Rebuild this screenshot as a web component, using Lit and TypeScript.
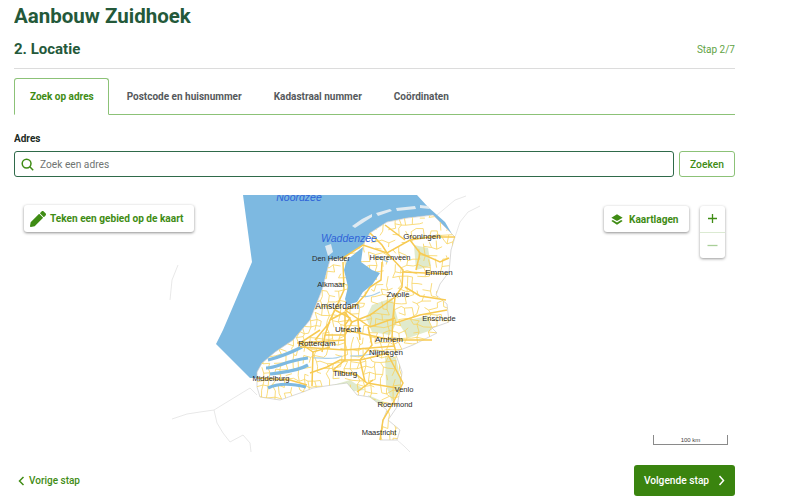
import { LitElement, html, css, svg } from 'lit';
import { customElement, state } from 'lit/decorators.js';

const LAND =
  'M330,260 343,258 363,245 370,233 387,222 407,218 433,215 445,227 455,237 451,250 449,272 440,284 436,295 447,304 449,322 432,328 437,333 413,345 395,352 402,372 400,390 397,407 388,420 400,430 397,440 380,440 383,420 387,410 370,397 357,395 347,383 332,385 313,388 303,392 280,400 260,397 257,387 257,372 262,363 275,352 293,340 310,320 322,290 328,267Z';
const SEA =
  'M243,195 417,195 428,207 445,222 452,234 445,228 433,215 407,218 387,222 370,233 363,245 343,258 330,260 328,267 322,290 310,320 293,342 275,358 262,365 257,378 250,378 216,344 223,330 252,262Z';
const LAKE = 'M347,260 363,247 361,262 372,270 380,273 372,285 363,292 357,302 347,305 345,299 348,287 344,270Z';
const ISLANDS = [
  'M325,246 331,244 333,252 328,256Z',
  'M352,226 362,219 372,214 372,217 355,228Z',
  'M376,213 390,209 392,211 378,216Z',
  'M396,208 415,206 416,209 397,211Z',
  'M420,205 428,206 430,209 420,208Z',
];
const DELTA = [
  'M268,360 C280,357 292,352 302,347',
  'M266,368 C278,368 284,361 308,358',
  'M270,374 C282,372 296,372 308,365',
  'M268,388 C276,384 290,383 306,387',
];
const RIVERS = [
  'M312,358 C322,357 332,361 342,356',
  'M350,356 C362,356 370,355 380,352',
  'M360,296 C366,298 372,296 380,292',
  'M378,256 C380,259 384,260 388,262',
];
const GREEN = [
  'M372,305 392,298 398,320 390,335 372,332 366,318Z',
  'M414,245 428,248 431,266 416,270Z',
  'M398,322 428,316 432,330 408,338Z',
  'M385,356 396,358 402,385 392,402 386,385Z',
  'M330,386 350,380 365,390 345,392Z',
  'M368,395 384,402 382,412 372,404Z',
];
const MAIN_ROADS = [
  'M343,258 363,245 387,253 410,240 430,237 455,237',
  'M410,240 420,253 416,270',
  'M382,262 381,280 370,287 365,295 355,306 345,310',
  'M387,253 403,270 402,287 395,297 393,317 392,338',
  'M403,272 448,274',
  'M395,297 370,315 352,322',
  'M395,323 420,315 447,310',
  'M345,310 370,327 395,318',
  'M343,262 344,290 335,310 330,320',
  'M345,312 345,335 345,360 333,370',
  'M345,330 392,340 432,340',
  'M297,343 345,340',
  'M300,347 345,350 395,346',
  'M313,352 312,386',
  'M310,373 327,367 340,360 360,360 373,357 388,353',
  'M333,370 357,375 367,383 397,388',
  'M357,392 373,380',
  'M365,382 360,360',
  'M387,353 403,383 393,403 383,420 380,440',
  'M257,378 290,380 307,385',
  'M330,320 345,312 352,322 345,335 325,335 330,320',
  'M315,340 330,322',
  'M360,340 358,320',
  'M405,240 385,225',
  'M320,330 300,343 313,352 330,347',
  'M368,327 372,345 360,360',
  'M392,338 396,352',
  'M325,335 322,352',
  'M405,287 420,296 446,300',
  'M420,253 440,262 449,258',
  'M370,233 382,245 387,253',
  'M335,310 350,318 345,325',
];
const BORDERS = [
  'M257,395 250,388 214,410 200,412 187,414 172,419',
  'M214,410 217,423 223,433 230,442 243,435 250,443 251,452',
  'M397,440 404,446 410,452',
  'M437,215 455,200 466,196',
  'M455,237 460,222 468,212 480,206',
  'M178,265 172,280 170,300',
];
const CITIES: [string, number, number, number][] = [
  ['Groningen', 422, 239, 8],
  ['Den Helder', 331, 261, 7.5],
  ['Heerenveen', 390, 260, 7.5],
  ['Emmen', 439, 275, 8],
  ['Alkmaar', 331, 287, 7.5],
  ['Zwolle', 398, 297, 8],
  ['Amsterdam', 337, 309, 8.5],
  ['Enschede', 439, 321, 7.5],
  ['Utrecht', 348, 332, 8],
  ['Rotterdam', 317, 346, 8],
  ['Arnhem', 389, 342, 8],
  ['Nijmegen', 386, 355, 8],
  ['Tilburg', 345, 376, 8],
  ['Middelburg', 271, 381, 7.5],
  ['Venlo', 404, 392, 7.5],
  ['Roermond', 395, 407, 7.5],
  ['Maastricht', 379, 435, 7.5],
];

// minor roads: jittered grid, good enough at this zoom level
function minorRoads(): string {
  let seed = 17;
  const rnd = () => {
    seed = (seed * 16807) % 2147483647;
    return seed / 2147483647;
  };
  const step = 6;
  const pt = new Map<string, [number, number]>();
  const at = (x: number, y: number) => {
    const k = x + ',' + y;
    if (!pt.has(k)) pt.set(k, [x + rnd() * 4 - 2, y + rnd() * 4 - 2]);
    return pt.get(k)!;
  };
  let d = '';
  for (let x = 250; x < 460; x += step) {
    for (let y = 212; y < 445; y += step) {
      const a = at(x, y);
      const chance = y > 300 ? 0.62 : 0.42;
      if (rnd() < chance) {
        const b = at(x + step, y);
        d += `M${a[0].toFixed(1)},${a[1].toFixed(1)}L${b[0].toFixed(1)},${b[1].toFixed(1)}`;
      }
      if (rnd() < chance) {
        const b = at(x, y + step);
        d += `M${a[0].toFixed(1)},${a[1].toFixed(1)}L${b[0].toFixed(1)},${b[1].toFixed(1)}`;
      }
    }
  }
  return d;
}

@customElement('app-root')
export class AppRoot extends LitElement {
  @state()
  activeTab = 'Zoek op adres';

  tabs = ['Zoek op adres', 'Postcode en huisnummer', 'Kadastraal nummer', 'Coördinaten'];
  minor = minorRoads();

  static styles = css`
    :host {
      display: block;
      width: 721px;
      height: 500px;
      margin-left: 14px;
      font-family: Roboto, sans-serif;
      color: #1f5c3a;
      overflow: hidden;
    }

    h1 {
      margin: 0;
      padding-top: 3px;
      height: 27px;
      font-size: 20.5px;
      line-height: 26px;
      font-weight: 700;
      color: #24593a;
    }

    .step-head {
      display: flex;
      align-items: center;
      justify-content: space-between;
      height: 32px;
      padding-top: 3px;
      padding-bottom: 3px;
      border-bottom: 1px solid #dcdcdc;
    }

    h2 {
      margin: 0;
      font-size: 15px;
      font-weight: 700;
      color: #24593a;
    }

    .step-count {
      font-size: 10px;
      color: #5fa345;
      padding-top: 1px;
    }

    .tabs {
      display: flex;
      margin-top: 9px;
      height: 37px;
      border-bottom: 1px solid #8cc277;
      box-sizing: border-box;
    }

    .tab {
      display: flex;
      align-items: center;
      padding: 0 16px;
      font-size: 10px;
      font-weight: 700;
      color: #55595c;
      box-sizing: border-box;
      height: 37px;
      white-space: nowrap;
    }

    .tab.active {
      padding: 0 14px 0 15px;
      margin-right: 2px;
      color: #3f8c14;
      background: #fff;
      border: 1px solid #8cc277;
      border-bottom: 1px solid #fff;
      border-radius: 3px 3px 0 0;
    }

    label {
      display: block;
      margin-top: 17px;
      height: 19px;
      font-size: 10px;
      line-height: 13px;
      font-weight: 700;
      color: #1d2b24;
    }

    .search {
      display: flex;
      gap: 5px;
      height: 26px;
    }

    .input {
      flex: 1;
      display: flex;
      align-items: center;
      gap: 6px;
      padding-left: 6px;
      border: 1.5px solid #2f6a4a;
      border-radius: 3px;
      font-size: 10.2px;
      color: #6f7472;
    }

    .btn-outline {
      display: flex;
      align-items: center;
      justify-content: center;
      width: 56px;
      box-sizing: border-box;
      border: 1px solid #8cc277;
      border-radius: 3px;
      font-size: 10.3px;
      font-weight: 500;
      color: #3f8c14;
    }

    .map {
      position: relative;
      margin-top: 18px;
      height: 257px;
      overflow: hidden;
    }

    .map > svg {
      display: block;
    }

    .soft {
      filter: blur(0.35px);
    }

    .map-btn {
      position: absolute;
      display: flex;
      align-items: center;
      box-sizing: border-box;
      height: 27px;
      background: #fff;
      border-radius: 3px;
      box-shadow: 0 1px 3px rgba(0, 0, 0, 0.45);
      font-size: 10.1px;
      font-weight: 700;
      color: #3f8c14;
      white-space: nowrap;
    }

    .draw {
      left: 10px;
      top: 10px;
      width: 170px;
      padding-left: 6px;
      gap: 4px;
    }

    .layers {
      left: 590px;
      top: 11px;
      width: 85px;
      height: 26px;
      padding-left: 7px;
      gap: 6px;
    }

    .zoom {
      position: absolute;
      left: 686px;
      top: 11px;
      width: 25px;
      height: 52px;
      display: flex;
      flex-direction: column;
      background: #fff;
      border-radius: 3px;
      box-shadow: 0 1px 3px rgba(0, 0, 0, 0.4);
    }

    .zoom div {
      flex: 1;
      display: flex;
      align-items: center;
      justify-content: center;
    }

    .zoom div + div {
      border-top: 1px solid #dbead2;
    }

    .scale {
      position: absolute;
      left: 639px;
      top: 240px;
      width: 75px;
      height: 10px;
      box-sizing: border-box;
      border: 1px solid #8a8a8a;
      border-top: 0;
      font-family: 'Liberation Sans', sans-serif;
      font-size: 6px;
      line-height: 10px;
      text-align: center;
      color: #444;
    }

    .footer {
      display: flex;
      align-items: center;
      justify-content: space-between;
      margin-top: 13px;
      padding-left: 4px;
    }

    .back {
      display: flex;
      align-items: center;
      gap: 4px;
      font-size: 10px;
      font-weight: 500;
      color: #3f8c14;
    }

    .next {
      display: flex;
      align-items: center;
      justify-content: center;
      gap: 9px;
      width: 101px;
      height: 31px;
      background: #3a840f;
      border-radius: 3px;
      font-size: 10.2px;
      font-weight: 500;
      color: #fff;
    }
  `;

  renderMap() {
    return html`
      <svg width="721" height="257" viewBox="14 195 721 257" xmlns="http://www.w3.org/2000/svg">
        <defs>
          <clipPath id="land"><path d=${LAND} /></clipPath>
        </defs>
        <g class="soft">
          ${BORDERS.map(b => svg`<path d=${b} fill="none" stroke="#e2e2e2" stroke-width="0.8" />`)}
          <path d=${SEA} fill="#7db9e1" />
          ${ISLANDS.map(p => svg`<path d=${p} fill="#dfeaf1" />`)}
          <path d=${LAND} fill="#fff" stroke="#c9c9c9" stroke-width="0.7" />
          <g clip-path="url(#land)">
            ${GREEN.map(p => svg`<path d=${p} fill="#c6d9a2" opacity="0.55" />`)}
            <path d=${this.minor} fill="none" stroke="#f7d35c" stroke-width="0.8" />
          </g>
          <path d=${LAKE} fill="#7db9e1" />
          ${DELTA.map(p => svg`<path d=${p} fill="none" stroke="#7db9e1" stroke-width="3.2" />`)}
          ${RIVERS.map(p => svg`<path d=${p} fill="none" stroke="#a9d0ea" stroke-width="1.2" />`)}
          ${MAIN_ROADS.map(r => svg`<path d=${r} fill="none" stroke="#f7ca52" stroke-width="1.5" />`)}
        </g>
        <g font-family="'Liberation Sans', sans-serif" text-anchor="middle">
          <text x="299" y="201" font-size="10.5" font-style="italic" fill="#2f63d8">Noordzee</text>
          <text x="349" y="242" font-size="10.5" font-style="italic" fill="#2f63d8">Waddenzee</text>
          ${CITIES.map(
            ([name, x, y, size]) => svg`<text x=${x} y=${y} font-size=${size} fill="#2a2a2a">${name}</text>`
          )}
        </g>
      </svg>
    `;
  }

  render() {
    return html`
      <h1>Aanbouw Zuidhoek</h1>
      <div class="step-head">
        <h2>2. Locatie</h2>
        <span class="step-count">Stap 2/7</span>
      </div>

      <div class="tabs">
        ${this.tabs.map(t => html`<div class="tab ${t === this.activeTab ? 'active' : ''}">${t}</div>`)}
      </div>

      <label>Adres</label>
      <div class="search">
        <div class="input">
          <svg width="13" height="13" viewBox="0 0 13 13" fill="none" stroke="#3f8c14" stroke-width="1.5">
            <circle cx="5.6" cy="5.6" r="4.4" />
            <path d="M8.8 8.8 12.2 12.2" />
          </svg>
          Zoek een adres
        </div>
        <div class="btn-outline">Zoeken</div>
      </div>

      <div class="map">
        ${this.renderMap()}
        <div class="map-btn draw">
          <svg width="16" height="16" viewBox="0 0 512 512" fill="#3f8c14">
            <path
              d="M497.9 142.1l-46.1 46.1c-4.7 4.7-12.3 4.7-17 0l-111-111c-4.7-4.7-4.7-12.3 0-17l46.1-46.1c18.7-18.7 49.1-18.7 67.9 0l60.1 60.1c18.8 18.7 18.8 49.1 0 67.9zM284.2 99.8L21.6 362.4.4 483.9c-2.9 16.4 11.4 30.6 27.8 27.8l121.5-21.3 262.6-262.6c4.7-4.7 4.7-12.3 0-17l-111-111c-4.8-4.7-12.4-4.7-17.1 0z"
            />
          </svg>
          Teken een gebied op de kaart
        </div>
        <div class="map-btn layers">
          <svg width="12" height="13" viewBox="0 0 16 16" fill="#3f8c14">
            <path d="M8 1 15.5 5.5 8 10 .5 5.5Z" />
            <path d="M2.4 8.6 8 12 13.6 8.6 15.5 10 8 15 .5 10Z" />
          </svg>
          Kaartlagen
        </div>
        <div class="zoom">
          <div>
            <svg width="11" height="11" viewBox="0 0 11 11" stroke="#3f8c14" stroke-width="1.3">
              <path d="M5.5 1V10M1 5.5H10" />
            </svg>
          </div>
          <div>
            <svg width="11" height="11" viewBox="0 0 11 11" stroke="#a9cf98" stroke-width="1.3">
              <path d="M.5 5.5H10.5" />
            </svg>
          </div>
        </div>
        <div class="scale">100 km</div>
      </div>

      <div class="footer">
        <div class="back">
          <svg width="7" height="10" viewBox="0 0 7 10" fill="none" stroke="#3f8c14" stroke-width="1.5">
            <path d="M5.5 1 1.5 5 5.5 9" />
          </svg>
          Vorige stap
        </div>
        <div class="next">
          Volgende stap
          <svg width="7" height="11" viewBox="0 0 7 11" fill="none" stroke="#fff" stroke-width="1.5">
            <path d="M1.5 1 5.5 5.5 1.5 10" />
          </svg>
        </div>
      </div>
    `;
  }
}

declare global {
  interface HTMLElementTagNameMap {
    'app-root': AppRoot;
  }
}
